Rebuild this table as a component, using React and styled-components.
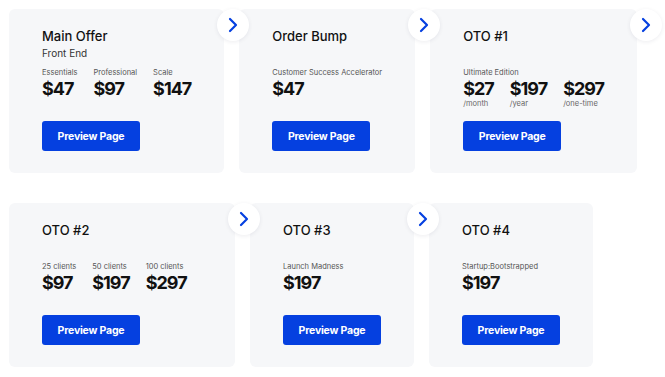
import React from "react";
import styled, { createGlobalStyle } from "styled-components";
import { ChevronRight } from "lucide-react";

const offers = [
  {
    title: "Main Offer",
    subtitle: "Front End",
    options: [
      { label: "Essentials", price: "$47" },
      { label: "Professional", price: "$97" },
      { label: "Scale", price: "$147" },
    ],
  },
  {
    title: "Order Bump",
    options: [{ label: "Customer Success Accelerator", price: "$47" }],
  },
  {
    title: "OTO #1",
    heading: "Ultimate Edition",
    options: [
      { price: "$27", period: "/month" },
      { price: "$197", period: "/year" },
      { price: "$297", period: "/one-time" },
    ],
  },
  {
    title: "OTO #2",
    minWidth: 226,
    options: [
      { label: "25 clients", price: "$97" },
      { label: "50 clients", price: "$197" },
      { label: "100 clients", price: "$297" },
    ],
  },
  {
    title: "OTO #3",
    options: [{ label: "Launch Madness", price: "$197" }],
  },
  {
    title: "OTO #4",
    options: [{ label: "Startup:Bootstrapped", price: "$197" }],
  },
];

const OfferCard = ({ offer, hasNext }) => (
  <Card $minWidth={offer.minWidth}>
    <Title>{offer.title}</Title>
    <Subtitle>{offer.subtitle || "\u00a0"}</Subtitle>
    <Pricing>
      {offer.heading && <Label>{offer.heading}</Label>}
      <Options>
        {offer.options.map((opt) => (
          <Option key={opt.price + (opt.label || opt.period)}>
            {opt.label && <Label>{opt.label}</Label>}
            <Price>{opt.price}</Price>
            <Period>{opt.period || "\u00a0"}</Period>
          </Option>
        ))}
      </Options>
    </Pricing>
    <PreviewButton>Preview Page</PreviewButton>
    {hasNext && (
      <NextButton aria-label="Next">
        <ChevronRight size={24} strokeWidth={2.2} />
      </NextButton>
    )}
  </Card>
);

const App = () => (
  <>
    <GlobalStyle />
    <Funnel>
      {offers.map((offer, i) => (
        <OfferCard key={offer.title} offer={offer} hasNext={i < offers.length - 1} />
      ))}
    </Funnel>
  </>
);

const GlobalStyle = createGlobalStyle`
  body {
    margin: 0;
    background: #ffffff;
    font-family: Inter, "Noto Sans", sans-serif;
    color: #111;
  }
`;

const Funnel = styled.div`
  display: flex;
  flex-wrap: wrap;
  align-items: flex-start;
  column-gap: 15px;
  row-gap: 30px;
  padding: 9px;
`;

const Card = styled.div`
  position: relative;
  display: flex;
  flex-direction: column;
  align-items: flex-start;
  box-sizing: border-box;
  min-width: ${({ $minWidth }) => ($minWidth ? `${$minWidth}px` : "0")};
  background-color: #f6f7f9;
  border-radius: 6px;
  padding: 19px 33px 22px;
`;

const Title = styled.h3`
  margin: 0;
  font-size: 13px;
  line-height: 16px;
  font-weight: 500;
  color: #111;
  white-space: nowrap;
`;

const Subtitle = styled.p`
  margin: 2px 0 0;
  font-size: 10px;
  line-height: 14px;
  color: #333;
  white-space: nowrap;
`;

const Pricing = styled.div`
  margin-top: 8px;
`;

const Options = styled.div`
  display: flex;
  gap: 16px;
`;

const Option = styled.div`
  display: flex;
  flex-direction: column;
`;

const Label = styled.span`
  display: block;
  font-size: 7.5px;
  line-height: 10px;
  color: #555;
  white-space: nowrap;
`;

const Price = styled.span`
  margin-top: 1px;
  font-size: 18px;
  line-height: 20px;
  font-weight: 700;
  color: #111;
  letter-spacing: -1px;
`;

const Period = styled.span`
  font-size: 7.5px;
  line-height: 10px;
  color: #666;
  white-space: nowrap;
`;

const PreviewButton = styled.button`
  margin-top: 12px;
  width: 98px;
  height: 30px;
  border: none;
  border-radius: 3px;
  background-color: #0540e0;
  color: #fff;
  font-family: inherit;
  font-size: 10.5px;
  font-weight: 700;
  letter-spacing: -0.2px;
  cursor: pointer;
`;

const NextButton = styled.button`
  position: absolute;
  top: 0;
  right: -25px;
  z-index: 2;
  width: 32px;
  height: 32px;
  padding: 0;
  border: none;
  border-radius: 50%;
  background: #fff;
  box-shadow: 0 1px 4px rgba(20, 30, 60, 0.08);
  color: #0540e0;
  display: flex;
  align-items: center;
  justify-content: center;
  cursor: pointer;
`;

export default App;
